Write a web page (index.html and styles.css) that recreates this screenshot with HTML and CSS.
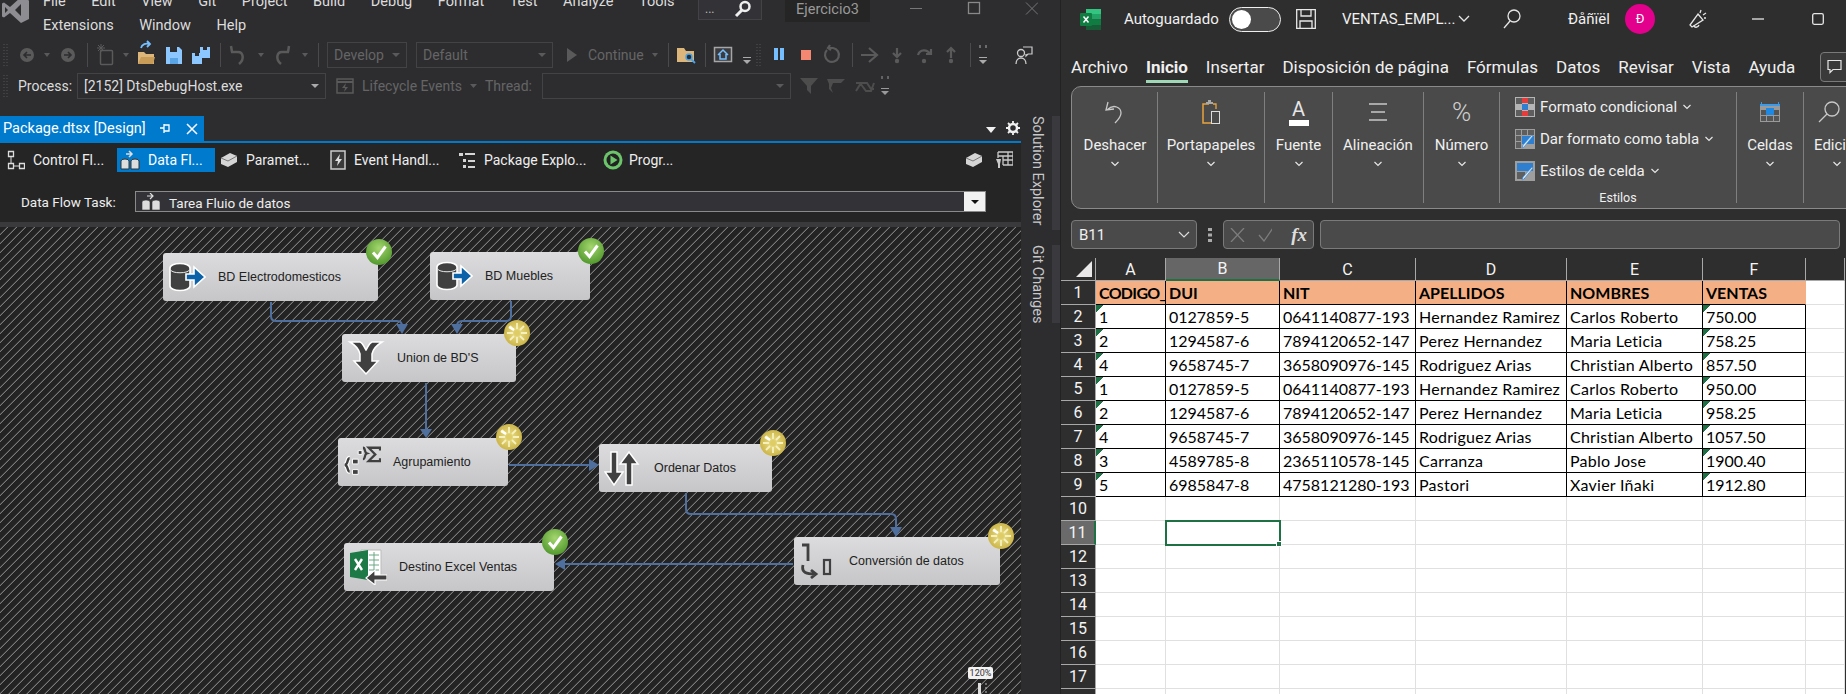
FILE: index.html
```html
<!DOCTYPE html>
<html lang="es">
<head>
  <meta charset="UTF-8">
  <meta name="viewport" content="width=device-width, initial-scale=1.0">
  <title>Ejercicio3</title>
  <link rel="stylesheet" href="styles.css">
</head>
<body>
  <svg class="defs" width="0" height="0">
    <defs>
      <radialGradient id="okFill" cx="50%" cy="35%" r="70%">
        <stop offset="0" stop-color="#a5d66f"/>
        <stop offset="1" stop-color="#4b9428"/>
      </radialGradient>
      <radialGradient id="runFill" cx="50%" cy="50%" r="60%">
        <stop offset="0" stop-color="#ece28f"/>
        <stop offset="1" stop-color="#c6ad3c"/>
      </radialGradient>
      <symbol id="badge-ok" viewBox="0 0 26 26">
        <circle cx="13" cy="13" r="13" fill="url(#okFill)"/>
        <path d="M7 13.500l4.500 5L19.500 7.500" fill="none" stroke="#fff" stroke-width="3"/>
      </symbol>
      <symbol id="badge-run" viewBox="0 0 26 26">
        <circle cx="13" cy="13" r="13" fill="url(#runFill)"/>
        <g stroke="#f6f0bf" stroke-width="1.800">
          <path d="M13 3v6M13 17v6M3 13h6M17 13h6M6 6l4 4M16 16l4 4M20 6l-4 4M10 16l-4 4"/>
        </g>
        <path d="M5 7l5 3" stroke="#fff" stroke-width="2.500"/>
        <circle cx="13" cy="13" r="3" fill="#dfcc66"/>
      </symbol>
      <symbol id="ic-source" viewBox="0 0 38 30">
        <path d="M2 6a10 4.500 0 0 1 20 0v18a10 4.500 0 0 1-20 0z" fill="#404040" stroke="#fff" stroke-width="1.600"/>
        <path d="M2.500 8a10 4 0 0 0 19 0" fill="none" stroke="#e8e8e8"/>
        <path d="M18 12h8V5l11 10-11 10v-7h-8z" fill="#0b62a8" stroke="#fff" stroke-width="1.600"/>
      </symbol>
      <symbol id="ic-chev" viewBox="0 0 10 6">
        <path d="M1.500 1l3.500 3.500L8.500 1" fill="none" stroke="#e6e6e6" stroke-width="1.200"/>
      </symbol>
    </defs>
  </svg>

  <div class="desk">
    <!-- Visual Studio -->
    <section class="vs">
      <header class="vs-top">
        <svg class="vs-logo" width="30" height="26" viewBox="0 0 30 26"><path d="M20 0l8 3.500V22l-8 4-11-10-6 4.500-2-1v-13l2-1 6 4.500zM20 7l-6 6 6 6zM4 10v6l3-3z" fill="#8d8d92" fill-rule="evenodd"/></svg>
        <nav class="vs-menu">
          <span>File</span><span>Edit</span><span>View</span><span>Git</span><span>Project</span><span>Build</span><span>Debug</span><span>Format</span><span>Test</span><span>Analyze</span><span>Tools</span>
          <span>Extensions</span><span>Window</span><span>Help</span>
        </nav>
        <div class="vs-search">
          <span>...</span>
          <svg width="18" height="18" viewBox="0 0 18 18"><circle cx="11" cy="6.500" r="4.500" fill="none" stroke="#eee" stroke-width="2.500"/><path d="M8 10l-6 6" stroke="#eee" stroke-width="3"/></svg>
        </div>
        <div class="vs-title">Ejercicio3</div>
        <svg class="vs-winbtns" width="128" height="16" viewBox="0 0 128 16"><path d="M0 8.500h12" stroke="#777"/><rect x="58.500" y="2.500" width="11" height="11" fill="none" stroke="#888" stroke-width="1.300"/><path d="M116 2.500l12 12M128 2.500l-12 12" stroke="#777"/></svg>
      </header>

      <div class="vs-bar">
        <svg width="327" height="30" viewBox="0 0 327 30">
          <path d="M4 4v22M7 4v22" stroke="#555" stroke-dasharray="1 2"/>
          <circle cx="27" cy="15" r="7" fill="#5a5a5a"/><path d="M31 15h-7M27 12l-3 3 3 3" fill="none" stroke="#2d2d30" stroke-width="1.600"/>
          <path d="M44 13h6l-3 4z" fill="#5a5a5a"/>
          <circle cx="68" cy="15" r="7" fill="#5a5a5a"/><path d="M64 15h7M68 12l3 3-3 3" fill="none" stroke="#2d2d30" stroke-width="1.600"/>
          <path d="M87.500 3v24" stroke="#4a4a4d"/>
          <path d="M97 8h8M101 4v8M98 5l6 6M104 5l-6 6" stroke="#5a5a5a"/><rect x="100.500" y="10.500" width="12" height="14" rx="1" fill="none" stroke="#5a5a5a" stroke-width="1.500"/>
          <path d="M123 13h6l-3 4z" fill="#5a5a5a"/>
          <path d="M138 12h6l2 2h8v10h-16z" fill="#dcb67a"/><path d="M141 8c1-4 5-5 8-4M147 1l3 3-3 3" fill="none" stroke="#75beff" stroke-width="1.800"/><path d="M138 24l3-7h14l-2 7z" fill="#c99c57"/>
          <path d="M166 7h13l3 3v14h-16z" fill="#8cc8ff"/><path d="M170 7h7v5h-7z" fill="#2d2d30"/><path d="M170 18h8v6h-8z" fill="#5aa4e6"/>
          <path d="M192 13h10v11h-10z" fill="#8cc8ff"/><path d="M200 7h10v11h-8v-5h-2z" fill="#8cc8ff"/><path d="M195 16h4v-3h-4zM203 7h4v3h-4z" fill="#2d2d30"/>
          <path d="M220.500 3v24" stroke="#4a4a4d"/>
          <path d="M232 12l-1-6M231 12h7c5 0 7 7 1 12" fill="none" stroke="#5a5a5a" stroke-width="2.500"/>
          <path d="M258 13h6l-3 4z" fill="#5a5a5a"/>
          <path d="M288 12l1-6M289 12h-7c-5 0-7 7-1 12" fill="none" stroke="#5a5a5a" stroke-width="2.500"/>
          <path d="M302 13h6l-3 4z" fill="#5a5a5a"/>
          <path d="M318.500 3v24" stroke="#4a4a4d"/>
        </svg>
        <div class="combo combo-dev off"><span>Develop</span><i></i></div>
        <div class="combo combo-def off"><span>Default</span><i></i></div>
        <svg class="play" width="11" height="14" viewBox="0 0 11 14"><path d="M0 0l10 7-10 7z" fill="#5a5a5a"/></svg>
        <span class="lbl-cont off">Continue</span>
        <svg width="411" height="30" viewBox="650 0 411 30">
          <path d="M653 13h6l-3 4z" fill="#5a5a5a"/>
          <path d="M669.500 3v24" stroke="#4a4a4d"/>
          <path d="M678 8h7l2 3h8v11h-17z" fill="#dcb67a"/><circle cx="690" cy="17" r="3" fill="#2d2d30" stroke="#4aa3e8" stroke-width="1.500"/><path d="M692 19l4 4" stroke="#4aa3e8" stroke-width="1.800"/>
          <path d="M706.500 3v24" stroke="#4a4a4d"/>
          <rect x="715.500" y="7.500" width="17" height="14" fill="#3b3b3f" stroke="#a6a6a6" stroke-width="1.500"/><path d="M719 15l5-5 5 5M721 14v5h6v-5" fill="none" stroke="#75beff" stroke-width="1.500"/>
          <path d="M744 17.500h8" stroke="#aaa"/><path d="M744 20h8l-4 4z" fill="#aaa"/>
          <path d="M758 4v22M761 4v22" stroke="#555" stroke-dasharray="1 2"/>
          <path d="M775 8h4v12h-4zM781 8h4v12h-4z" fill="#75beff"/>
          <rect x="802" y="10" width="10" height="10" fill="#f48771"/>
          <path d="M828 10a7 7 0 1 0 6-2h-4M831 5l-2 3 3 2" fill="none" stroke="#5a5a5a" stroke-width="2.200"/>
          <path d="M853.500 3v24" stroke="#4a4a4d"/>
          <path d="M862 15h15M870 8l8 7-8 7" fill="none" stroke="#5a5a5a" stroke-width="2.200"/>
          <path d="M898 8v8M894 13l4 4 4-4" fill="none" stroke="#5a5a5a" stroke-width="2.200"/><circle cx="898" cy="21" r="2.200" fill="#5a5a5a"/>
          <path d="M919 15c2-6 9-6 12-1M932 9v5h-5" fill="none" stroke="#5a5a5a" stroke-width="2.200"/><circle cx="925" cy="21" r="2.200" fill="#5a5a5a"/>
          <path d="M952 18v-9M948 12l4-4 4 4" fill="none" stroke="#5a5a5a" stroke-width="2.200"/><circle cx="952" cy="21" r="2.200" fill="#5a5a5a"/>
          <path d="M971.500 3v24" stroke="#4a4a4d"/>
          <path d="M981 5v3M987 5v3" stroke="#aaa"/><path d="M980 17.500h8" stroke="#aaa"/><path d="M980 20h8l-4 4z" fill="#aaa"/>
          <circle cx="1022" cy="13" r="3.500" fill="none" stroke="#ccc" stroke-width="1.300"/><path d="M1017 24c0-8 10-8 10 0" fill="none" stroke="#ccc" stroke-width="1.300"/><path d="M1024 7h9v7h-4l-2 2v-2" fill="none" stroke="#ccc" stroke-width="1.200"/>
        </svg>
      </div>

      <div class="vs-bar vs-bar2">
        <svg class="grip" width="18" height="30" viewBox="0 0 18 30"><path d="M4 4v22M7 4v22" stroke="#555" stroke-dasharray="1 2"/></svg>
        <span class="lbl-proc">Process:</span>
        <div class="combo combo-proc"><span>[2152] DtsDebugHost.exe</span><i></i></div>
        <svg class="ic-life" width="18" height="16" viewBox="0 0 18 16"><rect x="1" y="1" width="16" height="14" fill="none" stroke="#5a5a5a" stroke-width="1.500"/><path d="M1 4h16" stroke="#5a5a5a" stroke-width="2"/><path d="M10 5l-4 5h3l-1 4 4-5H9z" fill="#5a5a5a"/></svg>
        <span class="lbl-life off">Lifecycle Events</span>
        <svg width="8" height="6" viewBox="0 0 8 6"><path d="M0 1h7L3.500 5z" fill="#5a5a5a"/></svg>
        <span class="lbl-thread off">Thread:</span>
        <div class="combo combo-thread off"><span></span><i></i></div>
        <svg class="filters" width="100" height="30" viewBox="795 0 100 30">
          <path d="M800 7h18l-7 8v8l-4-4v-4z" fill="#4d4d4d"/>
          <path d="M827 8h18l-4 4h-8l-2 5 2 5-4-4v-5zM835 7h9" fill="#4d4d4d"/>
          <path d="M856 20l5-8h6l4 6h3M856 12h4l6 8h5l3-8" fill="none" stroke="#4d4d4d" stroke-width="2"/>
          <path d="M882 5v3M888 5v3" stroke="#999"/><path d="M881 17.500h8" stroke="#999"/><path d="M881 20h8l-4 4z" fill="#999"/>
        </svg>
      </div>

      <div class="vs-main">
        <div class="doc">
          <div class="doc-tabs">
            <div class="doc-tab">
              <span>Package.dtsx [Design]</span>
              <svg class="pin" width="12" height="12" viewBox="0 0 12 12"><path d="M4 2h5v6H4M4 5H0M4 1v9" fill="none" stroke="#fff" stroke-width="1.300"/></svg>
              <svg width="12" height="12" viewBox="0 0 12 12"><path d="M1 1l10 10M11 1L1 11" stroke="#fff" stroke-width="1.500"/></svg>
            </div>
            <svg class="doc-drop" width="12" height="6" viewBox="0 0 12 6"><path d="M1 0h10L6 6z" fill="#f0f0f0"/></svg>
            <svg class="doc-gear" width="14" height="14" viewBox="0 0 14 14"><circle cx="7" cy="7" r="4" fill="none" stroke="#f0f0f0" stroke-width="2.500"/><path d="M7 0v3M7 11v3M0 7h3M11 7h3M2 2l2 2M10 10l2 2M12 2l-2 2M4 10l-2 2" stroke="#f0f0f0" stroke-width="1.800"/></svg>
          </div>
          <div class="designer">
            <div class="d-tabs">
              <div class="d-tab">
                <svg width="18" height="20" viewBox="0 0 18 20"><path d="M1.500 1.500h5v5h-5zM1.500 13.500h5v5h-5zM12.500 13.500h5v5h-5z" fill="none" stroke="#ddd" stroke-width="1.300"/><path d="M4 7v6M7 16h5" stroke="#ddd"/></svg>
                <span>Control Fl...</span>
              </div>
              <div class="d-tab active">
                <svg width="20" height="22" viewBox="0 0 20 22"><path d="M1 12a4 2 0 0 1 8 0v8H1zM11 12a4 2 0 0 1 8 0v8h-8z" fill="#ddd" stroke="#333"/><path d="M6 5h6M9 2l3 3-3 3" fill="none" stroke="#ddd" stroke-width="1.500"/></svg>
                <span>Data Fl...</span>
              </div>
              <div class="d-tab">
                <svg width="18" height="16" viewBox="0 0 18 16"><path d="M1 6l9-5 7 3v6l-9 5-7-3z" fill="#d5d5d5"/><path d="M1 6l7 3 9-5" fill="none" stroke="#777"/></svg>
                <span>Paramet...</span>
              </div>
              <div class="d-tab">
                <svg width="16" height="20" viewBox="0 0 16 20"><rect x="1" y="1" width="14" height="18" fill="#3a3a3a" stroke="#ccc" stroke-width="1.500"/><path d="M10 4l-5 7h3l-1 5 5-7H9z" fill="#ddd"/></svg>
                <span>Event Handl...</span>
              </div>
              <div class="d-tab">
                <svg width="18" height="18" viewBox="0 0 18 18"><path d="M1 2h4v3H1zM7 2h10v2H7zM5 8h3v3H5zM10 9h7v2h-7zM5 14h3v3H5zM10 15h7v2h-7z" fill="#d5d5d5"/></svg>
                <span>Package Explo...</span>
              </div>
              <div class="d-tab">
                <svg width="20" height="20" viewBox="0 0 20 20"><circle cx="10" cy="10" r="9.500" fill="#6cc56a"/><circle cx="10" cy="10" r="6.500" fill="#222"/><path d="M7.500 5.500l7 4.500-7 4.500z" fill="#6cc56a"/></svg>
                <span>Progr...</span>
              </div>
              <div class="d-right">
                <svg width="18" height="16" viewBox="0 0 18 16"><path d="M1 6l9-5 7 3v6l-9 5-7-3z" fill="#d5d5d5"/><path d="M1 6l7 3 9-5" fill="none" stroke="#777"/></svg>
                <svg width="18" height="18" viewBox="0 0 18 18"><path d="M3 1h15v13H8M3 1v6M3 5h15M8 5v9M13 1v13M8 9h10" fill="none" stroke="#c9c9c9" stroke-width="1.300"/><path d="M1 8h5l-1 5v4H3v-4z" fill="#c9c9c9"/></svg>
              </div>
            </div>
            <div class="task-row">
              <span class="task-lbl">Data Flow Task:</span>
              <div class="task-combo">
                <svg width="18" height="18" viewBox="0 0 18 18"><path d="M0 9a4 2 0 0 1 8 0v8H0zM10 9a4 2 0 0 1 8 0v8h-8z" fill="#ddd" stroke="#333" stroke-width=".6"/><path d="M5 3h6M8 0l3 3-3 3" fill="none" stroke="#ddd" stroke-width="1.200"/></svg>
                <span>Tarea Fluio de datos</span>
                <div class="task-btn"><i></i></div>
              </div>
            </div>
          </div>
          <div class="task-sep"></div>

          <div class="canvas">
            <svg class="wires" width="1021" height="467" viewBox="0 227 1021 467">
              <g fill="none" stroke="#4f6f9f" stroke-width="2">
                <path d="M271 302v14q0 5 5 5h121q5 0 5 5v4"/>
                <path d="M511 301v15q0 5-5 5h-44q-5 0-5 5v4"/>
                <path d="M426 383v50"/>
                <path d="M509 465h84"/>
                <path d="M686 493v16q0 5 5 5h200q5 0 5 5v12"/>
                <path d="M793 564H562"/>
              </g>
              <g fill="#4f6f9f">
                <path d="M396 324h12l-6 10z"/>
                <path d="M451 324h12l-6 10z"/>
                <path d="M420 429h12l-6 9z"/>
                <path d="M589 459v12l10-6z"/>
                <path d="M890 527h12l-6 10z"/>
                <path d="M565 558v12l-10-6z"/>
              </g>
            </svg>

            <div class="node n-elec">
              <svg class="node-ic" viewBox="0 0 38 30"><use href="#ic-source"/></svg>
              <span>BD Electrodomesticos</span>
              <svg class="badge"><use href="#badge-ok"/></svg>
            </div>
            <div class="node n-mueb">
              <svg class="node-ic" viewBox="0 0 38 30"><use href="#ic-source"/></svg>
              <span>BD Muebles</span>
              <svg class="badge"><use href="#badge-ok"/></svg>
            </div>
            <div class="node n-union">
              <svg class="node-ic" viewBox="0 0 38 36"><path d="M3 2h10c3 1 4 5 6 8 2-3 3-7 6-8h10c-5 3-9 7-10 12v7h6L19 34 7 21h6v-7C12 9 8 5 3 2z" fill="#404040" stroke="#fff" stroke-width="1.500"/></svg>
              <span>Union de BD'S</span>
              <svg class="badge"><use href="#badge-run"/></svg>
            </div>
            <div class="node n-agr">
              <svg class="node-ic" viewBox="0 0 40 36">
                <g fill="none">
                  <path d="M7 14c-3 0-1 6-5 7 4 1 2 7 5 7" stroke="#fff" stroke-width="5"/>
                  <path d="M7 14c-3 0-1 6-5 7 4 1 2 7 5 7" stroke="#404040" stroke-width="2.500"/>
                  <path d="M21 3c3 0 1 5 4 6-3 1-1 6-4 6" stroke="#404040" stroke-width="2.400"/>
                  <path d="M39 6V3H27l7 7-7 7h12v-3" stroke="#404040" stroke-width="2.400"/>
                </g>
                <path d="M10 15h6v5h-6zM10 26h6v5h-6zM16 6h4v4h-4z" fill="#404040" stroke="#fff"/>
              </svg>
              <span>Agrupamiento</span>
              <svg class="badge"><use href="#badge-run"/></svg>
            </div>
            <div class="node n-ord">
              <svg class="node-ic" viewBox="0 0 38 36"><path d="M7 2h6v20h6L10 35 1 22h6zM28 35h-6V14h-6l9-12 9 12h-6z" fill="#404040" stroke="#fff" stroke-width="1.500"/></svg>
              <span>Ordenar Datos</span>
              <svg class="badge"><use href="#badge-run"/></svg>
            </div>
            <div class="node n-conv">
              <svg class="node-ic" viewBox="0 0 38 36"><g fill="none" stroke="#404040" stroke-width="2.800"><path d="M3 2h6v16"/><path d="M4 22c-2 8 4 9 12 9M12 27l5 4-5 4"/><rect x="25" y="17" width="6" height="14" stroke-width="2.200"/></g></svg>
              <span>Conversión de datos</span>
              <svg class="badge"><use href="#badge-run"/></svg>
            </div>
            <div class="node n-dest">
              <svg class="node-ic" viewBox="0 0 38 36">
                <path d="M12 1h20v26H12z" fill="#fff" stroke="#bbb"/>
                <path d="M20 6h10M20 11h10M20 16h10M20 21h10M25 3v22" stroke="#6aa885"/>
                <path d="M1 4l18-3v30L1 28z" fill="#1d7a46"/>
                <path d="M6 10l7 11M13 10L6 21" stroke="#fff" stroke-width="2.400"/>
                <path d="M38 26H26v-5l-9 8 9 7v-5h12z" fill="#404040" stroke="#fff" stroke-width="1.200"/>
              </svg>
              <span>Destino Excel Ventas</span>
              <svg class="badge"><use href="#badge-ok"/></svg>
            </div>

            <div class="zoomer">
              <span>120%</span>
              <svg width="18" height="12" viewBox="0 0 18 12"><path d="M6 0h3v12H6z" fill="#ddd"/><path d="M13 1h2M13 5h2M13 9h2" stroke="#bbb"/></svg>
            </div>
          </div>
        </div>

        <aside class="side">
          <div class="side-tab tab-sol"><span>Solution Explorer</span></div>
          <div class="side-tab tab-git"><span>Git Changes</span></div>
        </aside>
      </div>
    </section>

    <!-- Excel -->
    <section class="xl">
      <header class="xl-title">
        <svg class="xl-logo" width="22" height="21" viewBox="0 0 22 21"><path d="M6 0h15v5H6z" fill="#33c481"/><path d="M6 5h15v5.500H6z" fill="#21a366"/><path d="M6 10.500h15V16H6z" fill="#107c41"/><path d="M6 16h15v5H6z" fill="#185c37"/><rect x="0" y="4" width="12" height="13" rx="1" fill="#107c41"/><path d="M3.500 7.500l5 6M8.500 7.500l-5 6" stroke="#fff" stroke-width="1.500"/></svg>
        <span class="xl-auto">Autoguardado</span>
        <div class="toggle"><i></i></div>
        <svg class="xl-save" width="20" height="20" viewBox="0 0 20 20"><path d="M.7.7h18.600v18.600H.7zM5 1v6h10V1M4 19v-7h12v7" fill="none" stroke="#e8e8e8" stroke-width="1.300"/></svg>
        <span class="xl-file">VENTAS_EMPL...</span>
        <svg class="xl-fchev" width="12" height="8" viewBox="0 0 12 8"><path d="M1 1l5 5 5-5" fill="none" stroke="#e6e6e6" stroke-width="1.300"/></svg>
        <svg class="xl-find" width="18" height="20" viewBox="0 0 18 20"><circle cx="11" cy="7" r="6" fill="none" stroke="#e6e6e6" stroke-width="1.300"/><path d="M7 12l-6 7" stroke="#e6e6e6" stroke-width="1.300"/></svg>
        <span class="xl-user">Ðåñïël</span>
        <div class="avatar">Đ</div>
        <svg class="xl-mega" width="18" height="20" viewBox="0 0 18 20"><path d="M9 5l5 6-11 7-2-2zM5 16c0 3 4 3 5 0M12 1l-1 3M17 4l-3 2M17 9h-2" fill="none" stroke="#e6e6e6" stroke-width="1.300"/></svg>
        <svg class="xl-win" width="72" height="14" viewBox="0 0 72 14"><path d="M0 7h12" stroke="#e6e6e6" stroke-width="1.300"/><rect x="60.700" y="1.700" width="10.600" height="10.600" rx="1.500" fill="none" stroke="#e6e6e6" stroke-width="1.300"/></svg>
      </header>

      <nav class="xl-tabs">
        <span>Archivo</span><span class="on">Inicio</span><span>Insertar</span><span>Disposición de página</span><span>Fórmulas</span><span>Datos</span><span>Revisar</span><span>Vista</span><span>Ayuda</span>
        <div class="xl-comment"><svg width="16" height="16" viewBox="0 0 16 16"><path d="M1 1.500h13v9H6l-3 3v-3H1z" fill="none" stroke="#e6e6e6" stroke-width="1.200"/></svg></div>
      </nav>

      <div class="ribbon">
        <div class="rgroup g-undo">
          <div class="r-ic"><svg width="22" height="24" viewBox="0 0 22 24"><path d="M4 2L2 10l8-1M3 10c7-7 14-2 14 3 0 3-3 7-6 10" fill="none" stroke="#c8c8c8" stroke-width="1.300"/></svg></div>
          <span>Deshacer</span>
          <svg class="chev" width="10" height="6"><use href="#ic-chev"/></svg>
        </div>
        <div class="rgroup g-clip">
          <div class="r-ic"><svg width="20" height="26" viewBox="0 0 20 26"><path d="M8 5H2v19h8" fill="none" stroke="#e8a33d" stroke-width="1.500"/><path d="M5 5V3h2V1h3v2h2v2z" fill="#aaa"/><rect x="10.500" y="12.500" width="8" height="12" fill="#4a4a4a" stroke="#ddd"/><path d="M12 5h3v5" fill="none" stroke="#e8a33d" stroke-width="1.300"/></svg></div>
          <span>Portapapeles</span>
          <svg class="chev" width="10" height="6"><use href="#ic-chev"/></svg>
        </div>
        <div class="rgroup g-font">
          <div class="r-ic r-a"><b>A</b><i></i></div>
          <span>Fuente</span>
          <svg class="chev" width="10" height="6"><use href="#ic-chev"/></svg>
        </div>
        <div class="rgroup g-align">
          <div class="r-ic"><svg width="20" height="20" viewBox="0 0 20 20"><path d="M1 2h18M3 10h14M1 18h18" stroke="#c8c8c8" stroke-width="1.600"/></svg></div>
          <span>Alineación</span>
          <svg class="chev" width="10" height="6"><use href="#ic-chev"/></svg>
        </div>
        <div class="rgroup g-num">
          <div class="r-ic r-pct">%</div>
          <span>Número</span>
          <svg class="chev" width="10" height="6"><use href="#ic-chev"/></svg>
        </div>
        <div class="rgroup g-styles">
          <div class="r-style">
            <svg width="20" height="20" viewBox="0 0 20 20"><path d="M0 0h20v20H0z" fill="#b5b5b5"/><path d="M1 1h6v6H1zM13 1h6v6h-6zM1 13h6v6H1zM13 13h6v6h-6z" fill="#5e5e5e"/><path d="M7 1h6v5H7zM7 14h6v5H7z" fill="#e63b3b"/><path d="M7 7h6v6H7z" fill="#2f7fd1"/></svg>
            <span>Formato condicional</span><svg width="10" height="6"><use href="#ic-chev"/></svg>
          </div>
          <div class="r-style">
            <svg width="20" height="20" viewBox="0 0 20 20"><path d="M0 0h20v20H0z" fill="#9e9e9e"/><path d="M1 1h5v5H1zM7 1h5v5H7zM13 1h6v5h-6zM1 7h5v5H1zM1 13h5v6H1z" fill="#5e5e5e"/><path d="M7 7h12v8H7z" fill="#2f7fd1"/><path d="M18 7L9 18l-2 1 1-3 9-10z" fill="#d8ecff" stroke="#2f7fd1" stroke-width=".6"/></svg>
            <span>Dar formato como tabla</span><svg width="10" height="6"><use href="#ic-chev"/></svg>
          </div>
          <div class="r-style">
            <svg width="20" height="20" viewBox="0 0 20 20"><path d="M0 0h20v20H0z" fill="#9e9e9e"/><path d="M2 2h16v8H2z" fill="#2f7fd1"/><path d="M2 11h8v7H2z" fill="#5e5e5e"/><path d="M18 7L9 18l-2 1 1-3 9-10z" fill="#d8ecff" stroke="#2f7fd1" stroke-width=".6"/></svg>
            <span>Estilos de celda</span><svg width="10" height="6"><use href="#ic-chev"/></svg>
          </div>
          <div class="r-label">Estilos</div>
        </div>
        <div class="rgroup g-cells">
          <div class="r-ic"><svg width="20" height="20" viewBox="0 0 20 20"><path d="M0 2h20v18H0z" fill="#9a9a9a"/><path d="M1 8h5v5H1zM7 8h6v5H7zM14 8h5v5h-5zM1 14h5v5H1zM7 14h6v5H7zM14 14h5v5h-5z" fill="#555"/><path d="M6 6h8v7H6z" fill="#1e88e5"/><path d="M0 2h20v2H0zM1 0h1v3H1zM18 0h1v3h-1z" fill="#3b9be8"/></svg></div>
          <span>Celdas</span>
          <svg class="chev" width="10" height="6"><use href="#ic-chev"/></svg>
        </div>
        <div class="rgroup g-edit">
          <div class="r-ic r-ic-left"><svg width="22" height="22" viewBox="0 0 22 22"><circle cx="14" cy="8" r="7" fill="none" stroke="#c8c8c8" stroke-width="1.300"/><path d="M9 13l-8 8" stroke="#c8c8c8" stroke-width="1.300"/></svg></div>
          <span>Edición</span>
          <svg class="chev" width="10" height="6"><use href="#ic-chev"/></svg>
        </div>
      </div>

      <div class="fbar">
        <div class="namebox"><span>B11</span><svg width="12" height="7" viewBox="0 0 12 7"><path d="M1 1l5 5 5-5" fill="none" stroke="#ddd" stroke-width="1.200"/></svg></div>
        <svg class="fgrip" width="4" height="14" viewBox="0 0 4 14"><path d="M0 0h4v3H0zM0 5.500h4v3H0zM0 11h4v3H0z" fill="#aaa"/></svg>
        <div class="fxbox">
          <svg width="42" height="14" viewBox="0 0 42 14"><path d="M1 0l13 14M14 0L1 14" stroke="#7d7d7d" stroke-width="1.300"/><path d="M29 7l5 6L43 0" fill="none" stroke="#7d7d7d" stroke-width="1.300"/></svg>
          <em>fx</em>
        </div>
        <div class="finput"></div>
      </div>

      <table class="sheet">
        <colgroup>
          <col class="c-h"><col class="c-a"><col class="c-b"><col class="c-c"><col class="c-d"><col class="c-e"><col class="c-f"><col class="c-g">
        </colgroup>
        <thead>
          <tr>
            <th class="corner"><svg width="16" height="16" viewBox="0 0 16 16"><path d="M16 0v16H0z" fill="#e9e9e9"/></svg></th>
            <th>A</th><th class="cur">B</th><th>C</th><th>D</th><th>E</th><th>F</th><th></th>
          </tr>
        </thead>
        <tbody>
          <tr class="hd"><th>1</th><td>CODIGO_</td><td>DUI</td><td>NIT</td><td>APELLIDOS</td><td>NOMBRES</td><td>VENTAS</td><td class="blank"></td></tr>
          <tr class="dt"><th>2</th><td class="fl">1</td><td>0127859-5</td><td>0641140877-193</td><td>Hernandez Ramirez</td><td>Carlos Roberto</td><td class="fl">750.00</td><td class="blank"></td></tr>
          <tr class="dt"><th>3</th><td class="fl">2</td><td>1294587-6</td><td>7894120652-147</td><td>Perez Hernandez</td><td>Maria Leticia</td><td class="fl">758.25</td><td class="blank"></td></tr>
          <tr class="dt"><th>4</th><td class="fl">4</td><td>9658745-7</td><td>3658090976-145</td><td>Rodriguez Arias</td><td>Christian Alberto</td><td class="fl">857.50</td><td class="blank"></td></tr>
          <tr class="dt"><th>5</th><td class="fl">1</td><td>0127859-5</td><td>0641140877-193</td><td>Hernandez Ramirez</td><td>Carlos Roberto</td><td class="fl">950.00</td><td class="blank"></td></tr>
          <tr class="dt"><th>6</th><td class="fl">2</td><td>1294587-6</td><td>7894120652-147</td><td>Perez Hernandez</td><td>Maria Leticia</td><td class="fl">958.25</td><td class="blank"></td></tr>
          <tr class="dt"><th>7</th><td class="fl">4</td><td>9658745-7</td><td>3658090976-145</td><td>Rodriguez Arias</td><td>Christian Alberto</td><td class="fl">1057.50</td><td class="blank"></td></tr>
          <tr class="dt"><th>8</th><td class="fl">3</td><td>4589785-8</td><td>2365110578-145</td><td>Carranza</td><td>Pablo Jose</td><td class="fl">1900.40</td><td class="blank"></td></tr>
          <tr class="dt"><th>9</th><td class="fl">5</td><td>6985847-8</td><td>4758121280-193</td><td>Pastori</td><td>Xavier Iñaki</td><td class="fl">1912.80</td><td class="blank"></td></tr>
          <tr><th>10</th><td></td><td></td><td></td><td></td><td></td><td></td><td></td></tr>
          <tr><th class="cur">11</th><td></td><td class="sel"></td><td></td><td></td><td></td><td></td><td></td></tr>
          <tr><th>12</th><td></td><td></td><td></td><td></td><td></td><td></td><td></td></tr>
          <tr><th>13</th><td></td><td></td><td></td><td></td><td></td><td></td><td></td></tr>
          <tr><th>14</th><td></td><td></td><td></td><td></td><td></td><td></td><td></td></tr>
          <tr><th>15</th><td></td><td></td><td></td><td></td><td></td><td></td><td></td></tr>
          <tr><th>16</th><td></td><td></td><td></td><td></td><td></td><td></td><td></td></tr>
          <tr><th>17</th><td></td><td></td><td></td><td></td><td></td><td></td><td></td></tr>
          <tr><th></th><td></td><td></td><td></td><td></td><td></td><td></td><td></td></tr>
        </tbody>
      </table>
    </section>
  </div>
</body>
</html>
```

FILE: styles.css
```css
*, *::before, *::after { box-sizing: border-box; }
html, body {
  margin: 0;
  padding: 0;
  height: 100%;
  overflow: hidden;
  background: #2d2d30;
  font-family: Roboto, 'Noto Sans', sans-serif;
}
svg { display: block; flex: none; }
.defs { position: absolute; }
.desk {
  display: flex;
  width: 1846px;
  height: 694px;
  overflow: hidden;
}

/* Visual Studio */
.vs {
  width: 1061px;
  height: 694px;
  flex: none;
  background: #2d2d30;
  color: #dcdcdc;
  font-size: 14px;
  border-right: 1px solid #222;
  display: flex;
  flex-direction: column;
  overflow: hidden;
}
.off { color: #656565; }
.vs-top {
  height: 40px;
  flex: none;
  display: flex;
  align-items: flex-start;
  overflow: hidden;
}
.vs-logo { margin: -3px 0 0 1px; }
.vs-menu {
  width: 655px;
  flex: none;
  margin: -10px 0 0 12px;
  display: flex;
  flex-wrap: wrap;
  column-gap: 25.500px;
  font-size: 14.500px;
  line-height: 24px;
}
.vs-search {
  width: 64px;
  height: 22px;
  margin-top: -2px;
  padding: 0 9px 0 6px;
  flex: none;
  border: 1px solid #434346;
  background: #333337;
  display: flex;
  justify-content: space-between;
  align-items: center;
  font-size: 12px;
  color: #bbb;
}
.vs-title {
  width: 85px;
  height: 22px;
  margin-left: 23px;
  flex: none;
  background: #252526;
  color: #999;
  font-size: 14.500px;
  line-height: 20px;
  text-align: center;
}
.vs-winbtns { margin-left: 40px; }
.vs-bar {
  height: 30px;
  flex: none;
  display: flex;
  align-items: center;
}
.vs-bar2 { margin-top: 1px; }
.combo {
  height: 26px;
  flex: none;
  padding: 0 6px;
  display: flex;
  align-items: center;
  justify-content: space-between;
  border: 1px solid #434346;
  white-space: nowrap;
}
.combo i {
  width: 0;
  height: 0;
  border: 4px solid transparent;
  border-top: 4px solid #5a5a5a;
  border-bottom: 0;
}
.combo-dev { width: 80px; }
.combo-def { width: 137px; margin-left: 9px; }
.combo-proc { width: 249px; margin-left: 0; }
.combo-proc i { border-top-color: #aaa; }
.combo-thread { width: 249px; }
.play { margin-left: 14px; }
.lbl-cont { width: 62px; margin-left: 10px; }
.lbl-proc { width: 59px; }
.ic-life { margin-left: 10px; }
.lbl-life { width: 108px; margin-left: 8px; }
.lbl-thread { width: 57px; margin-left: 7px; }
.filters { margin-left: 4px; }

.vs-main {
  flex: 1;
  margin-top: 15px;
  display: flex;
  min-height: 0;
}
.doc {
  width: 1021px;
  flex: none;
  display: flex;
  flex-direction: column;
}
.doc-tabs {
  height: 27px;
  flex: none;
  display: flex;
  align-items: flex-start;
  border-bottom: 2px solid #007acc;
}
.doc-tab {
  width: 204px;
  height: 25px;
  padding-left: 3px;
  background: #007acc;
  color: #fff;
  font-size: 14.500px;
  display: flex;
  align-items: center;
}
.doc-tab span { width: 157px; white-space: nowrap; }
.pin { margin-right: 14px; }
.doc-drop { margin: 11px 0 0 781px; }
.doc-gear { margin: 5px 0 0 9px; }
.designer {
  height: 79px;
  flex: none;
  background: #252526;
  color: #eee;
}
.d-tabs {
  padding-top: 5px;
  display: grid;
  grid-template-columns: 117px 98px 113px 129px 144px 96px 1fr;
}
.d-tab {
  height: 24px;
  padding-left: 7px;
  display: flex;
  align-items: center;
  gap: 8px;
  white-space: nowrap;
}
.d-tab.active { background: #007acc; padding-left: 3px; color: #fff; }
.d-tab:nth-child(3) { padding-left: 5px; }
.d-tab:nth-child(4) { padding-left: 2px; }
.d-tab:nth-child(5) { padding-left: 1px; }
.d-tab:nth-child(6) { padding-left: 2px; }
.d-tab:nth-child(6) span { margin-left: -2px; }
.d-right {
  display: flex;
  justify-content: flex-end;
  align-items: center;
  gap: 12px;
  padding-right: 8px;
}
.task-row {
  margin-top: 19px;
  display: flex;
  align-items: center;
}
.task-lbl { width: 135px; padding-left: 21px; font-size: 13.500px; }
.task-combo {
  width: 851px;
  height: 21px;
  padding-left: 6px;
  background: #333337;
  border: 1px solid #8a8a8a;
  display: flex;
  align-items: center;
  gap: 9px;
  font-size: 13.500px;
}
.task-combo span { flex: 1; padding-top: 3px; }
.task-btn {
  width: 21px;
  height: 19px;
  background: #f2f2f2;
  display: flex;
  align-items: center;
  justify-content: center;
}
.task-btn i {
  width: 0;
  height: 0;
  border: 4px solid transparent;
  border-top: 4px solid #111;
  border-bottom: 0;
}
.task-sep { height: 5px; flex: none; background: #3a3a3d; }
.canvas {
  flex: 1;
  position: relative;
  overflow: hidden;
  background: repeating-linear-gradient(135deg, #232323 0, #232323 4.700px, #8c8c8c 5.500px, #232323 6.364px);
}
.wires { position: absolute; left: 0; top: 0; }
.node {
  position: absolute;
  height: 48px;
  border-radius: 3px;
  background: linear-gradient(#dcdcde, #c6c6c8);
  color: #222;
  font-family: 'Liberation Sans', sans-serif;
  font-size: 12.500px;
  display: flex;
  align-items: center;
  white-space: nowrap;
}
.node-ic { width: 38px; height: 36px; margin: 0 12px 0 5px; }
.badge { position: absolute; width: 26px; height: 26px; right: -14px; top: -14px; }
.n-elec  { left: 163px; top: 26px;  width: 215px; }
.n-mueb  { left: 430px; top: 25px;  width: 160px; }
.n-union { left: 342px; top: 107px; width: 174px; }
.n-agr   { left: 338px; top: 211px; width: 170px; }
.n-ord   { left: 599px; top: 217px; width: 173px; }
.n-conv  { left: 794px; top: 310px; width: 206px; }
.n-dest  { left: 344px; top: 316px; width: 210px; }
.zoomer { position: absolute; left: 968px; top: 440px; }
.zoomer span {
  display: block;
  width: 25px;
  height: 12px;
  background: #f2f2f2;
  border-radius: 2px;
  color: #333;
  font-size: 9px;
  line-height: 12px;
  text-align: center;
}
.zoomer svg { margin: 4px 0 0 4px; }
.side {
  flex: 1;
  padding-top: 0;
  display: flex;
  flex-direction: column;
  gap: 15px;
}
.side-tab {
  display: flex;
  justify-content: flex-end;
  border-right: 8px solid #3a3a3e;
  color: #c8c8c8;
  font-size: 14.500px;
}
.side-tab span {
  writing-mode: vertical-rl;
  margin-right: 6px;
  white-space: nowrap;
}
.tab-sol { height: 114px; }
.tab-git { height: 78px; }

/* Excel */
.xl {
  width: 785px;
  flex: none;
  background: #2e2e2e;
  color: #f0f0f0;
  font-size: 15px;
  overflow: hidden;
}
.xl-title {
  height: 40px;
  padding-bottom: 2px;
  display: flex;
  align-items: center;
  white-space: nowrap;
}
.xl-logo { margin-left: 19px; }
.xl-auto { width: 105px; margin-left: 22px; font-size: 15px; }
.toggle {
  width: 52px;
  height: 25px;
  padding: 2px;
  background: #4a4a4a;
  border: 1.500px solid #efefef;
  border-radius: 13px;
}
.toggle i {
  display: block;
  width: 19px;
  height: 19px;
  background: #fff;
  border-radius: 50%;
}
.xl-save { margin-left: 15px; }
.xl-file { width: 112px; margin-left: 26px; font-size: 15px; }
.xl-fchev { margin-left: 4px; }
.xl-find { margin-left: 33px; }
.xl-user { width: 57px; margin-left: 47px; font-size: 15px; }
.avatar {
  width: 30px;
  height: 30px;
  border-radius: 50%;
  background: #e3008c;
  color: #fff;
  font-size: 13px;
  line-height: 30px;
  text-align: center;
}
.xl-mega { margin-left: 34px; }
.xl-win { margin-left: 45px; }
.xl-tabs {
  height: 46px;
  padding: 12px 0 0 10px;
  display: flex;
  gap: 18px;
  font-size: 17px;
  white-space: nowrap;
}
.xl-tabs span { height: 31px; line-height: 30px; }
.xl-tabs .on { font-weight: 700; border-bottom: 3px solid #9fd8b6; }
.xl-comment {
  width: 40px;
  height: 30px;
  margin: 0 -14px 0 auto;
  flex: none;
  padding: 6px 6px;
  background: #3a3a3a;
  border: 1px solid #7a7a7a;
  border-radius: 4px;
}
.ribbon {
  width: 800px;
  height: 123px;
  margin-left: 10px;
  padding-left: 1px;
  background: #4a4a4a;
  border: 1px solid #8a8a8a;
  border-radius: 10px;
  display: flex;
  font-size: 15px;
}
.rgroup {
  height: 111px;
  margin-top: 5px;
  flex: none;
  padding-top: 2px;
  display: flex;
  flex-direction: column;
  align-items: center;
  border-right: 1px solid #7f7f7f;
  white-space: nowrap;
}
.r-ic {
  height: 36px;
  flex: none;
  display: flex;
  flex-direction: column;
  align-items: center;
  justify-content: center;
}
.rgroup > span { margin-top: 5px; line-height: 20px; }
.chev { margin-top: 6px; }
.g-undo { width: 85px; }
.g-clip { width: 107px; }
.g-font { width: 68px; }
.g-align { width: 91px; }
.g-num { width: 76px; }
.g-styles {
  width: 237px;
  padding: 0 0 0 15px;
  align-items: flex-start;
  gap: 2px;
}
.g-cells { width: 67px; }
.g-edit { width: 70px; border-right: 0; padding-left: 10px; align-items: flex-start; }
.g-edit .chev { margin-left: 18px; }
.r-ic-left { align-items: flex-start; margin-left: 4px; }
.r-a b { font-weight: 400; font-size: 20px; line-height: 20px; color: #e6e6e6; }
.r-a i { width: 20px; height: 6px; background: #fff; margin-top: 1px; }
.r-pct { font-size: 26px; font-weight: 300; color: #cfcfcf; }
.r-style {
  height: 30px;
  flex: none;
  display: flex;
  align-items: center;
  gap: 5px;
  font-size: 15px;
}
.r-label {
  width: 100%;
  flex: none;
  margin-top: 2px;
  padding-right: 15px;
  text-align: center;
  font-size: 12.500px;
  line-height: 16px;
}
.fbar {
  height: 29px;
  margin: 11px 0 9px 10px;
  display: flex;
  align-items: center;
}
.namebox, .fxbox, .finput {
  height: 29px;
  flex: none;
  background: #4a4a4a;
  border: 1px solid #7a7a7a;
  border-radius: 4px;
  display: flex;
  align-items: center;
}
.namebox {
  width: 126px;
  padding: 0 6px 0 7px;
  justify-content: space-between;
  font-size: 15px;
}
.fgrip { margin: 0 11px; }
.fxbox {
  width: 91px;
  padding: 0 6px;
  justify-content: space-between;
}
.fxbox em {
  font-family: 'Liberation Serif', serif;
  font-size: 19px;
  font-weight: 700;
  color: #dedede;
}
.finput { width: 520px; margin-left: 6px; }

.sheet {
  width: 784px;
  table-layout: fixed;
  border-collapse: separate;
  border-spacing: 0;
  background: #fff;
  font-family: Lato, 'Liberation Sans', sans-serif;
  font-size: 16px;
}
.c-h { width: 35px; }
.c-a { width: 70px; }
.c-b { width: 114px; }
.c-c { width: 136px; }
.c-d { width: 151px; }
.c-e { width: 136px; }
.c-f { width: 103px; }
.c-g { width: 39px; }
.sheet th {
  padding: 0;
  background: #2e2e2e;
  color: #f4f4f4;
  font-family: Roboto, sans-serif;
  font-size: 16px;
  font-weight: 400;
  border-right: 1px solid #a8a8a8;
  border-bottom: 1px solid #a8a8a8;
}
.sheet thead th { height: 23px; }
.sheet .corner { padding: 0 3px 0 15px; }
.sheet thead th.cur {
  background: #666;
  border-bottom: 2px solid #1e7145;
}
.sheet tbody th.cur {
  background: #6a6a6a;
  border-right: 2px solid #1e7145;
}
.sheet td {
  height: 24px;
  padding: 0 3px;
  color: #000;
  border-right: 1px solid #e0e0e0;
  border-bottom: 1px solid #e0e0e0;
  overflow: hidden;
  white-space: nowrap;
}
.hd td, .dt td {
  border-right-color: #000;
  border-bottom-color: #000;
}
.hd td { background: #f4b084; font-weight: 700; }
.hd td:nth-child(2) { letter-spacing: -.7px; }
.dt td:nth-child(5), .dt td:nth-child(6) { letter-spacing: .25px; }
.hd td.blank, .dt td.blank {
  background: #fff;
  border-right-color: #e0e0e0;
  border-bottom-color: #e0e0e0;
}
.hd td:nth-child(7) { border-right-color: #f4b084; }
.dt td.fl {
  background: linear-gradient(135deg, #1e7145 50%, transparent 50%) no-repeat 0 0 / 8px 8px;
}
.sheet td.sel {
  position: relative;
  overflow: visible;
  outline: 2px solid #1e7145;
  outline-offset: -1px;
}
.sel::after {
  content: "";
  position: absolute;
  right: -3px;
  bottom: -3px;
  width: 6px;
  height: 6px;
  background: #1e7145;
  border: 1px solid #fff;
}
```
